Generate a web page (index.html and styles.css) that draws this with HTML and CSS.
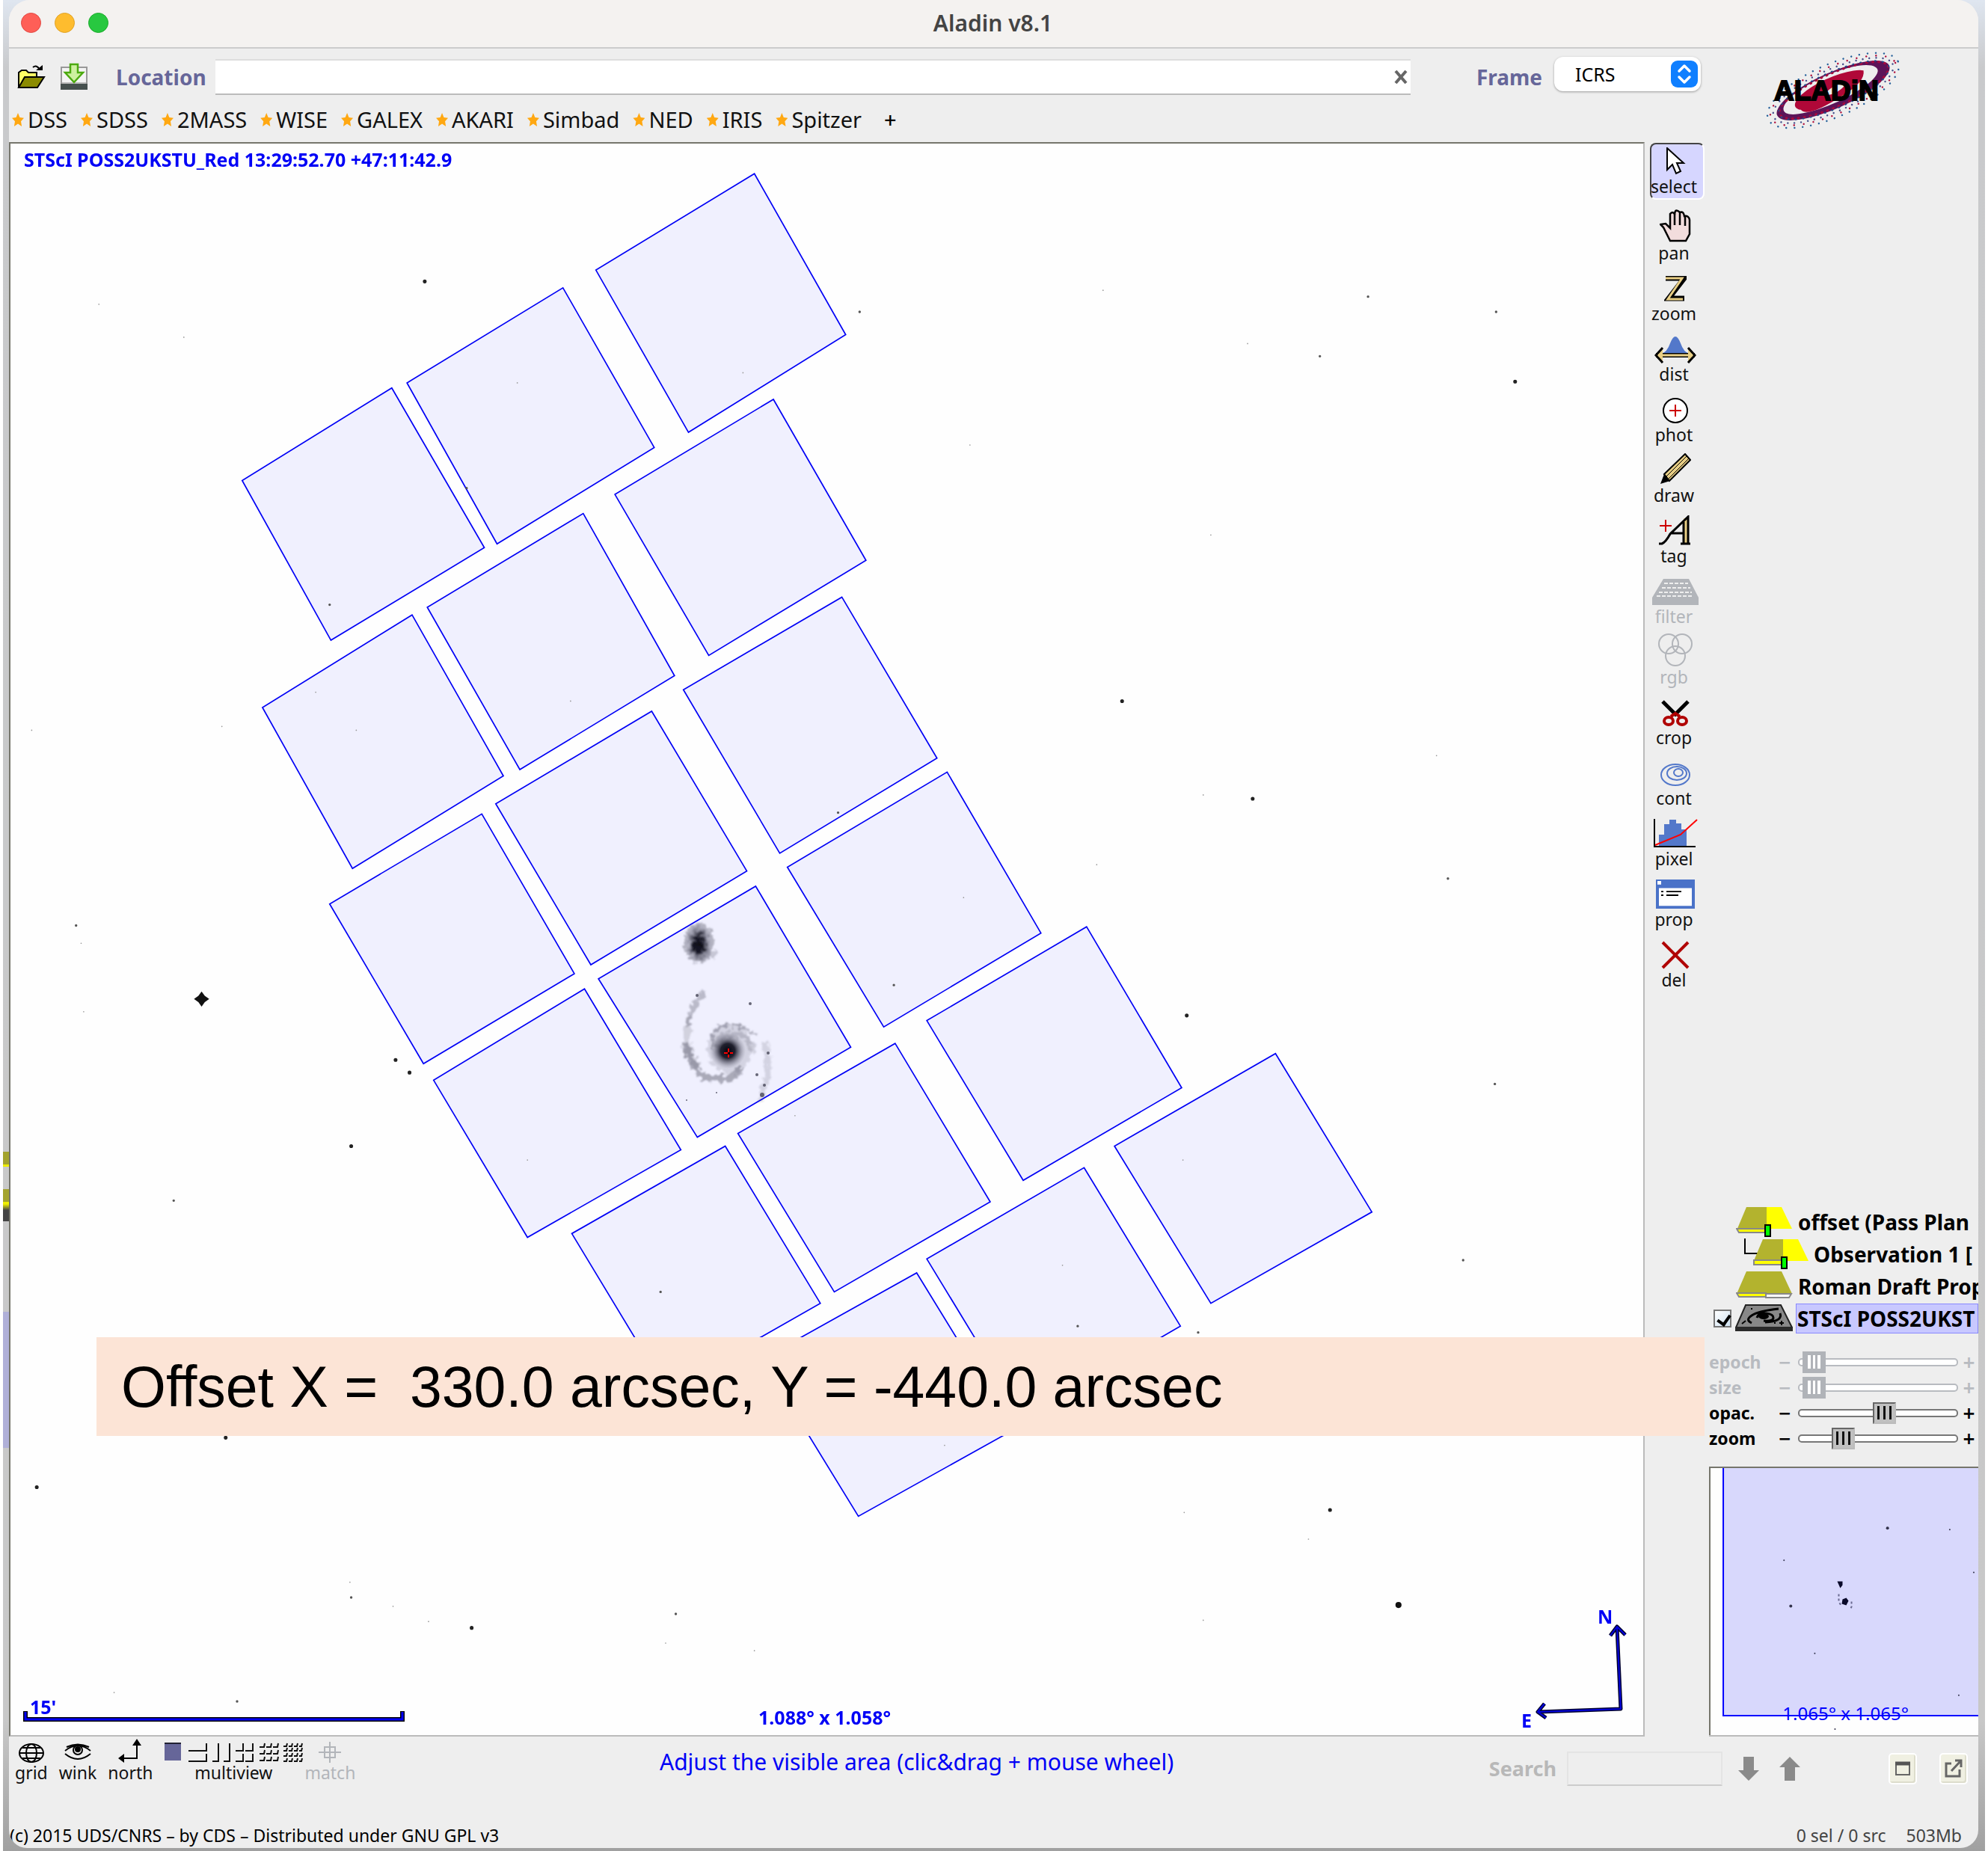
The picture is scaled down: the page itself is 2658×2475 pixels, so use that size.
FILE: index.html
```html
<!DOCTYPE html>
<html lang="en">
<head>
<meta charset="utf-8">
<title>Aladin v8.1</title>
<link rel="stylesheet" href="styles.css">
</head>
<body>
<div class="desktop">
<div class="window">
  <header class="titlebar">
    <div class="lights"><span class="light red"></span><span class="light amber"></span><span class="light green"></span></div>
    <h1 class="title">Aladin v8.1</h1>
  </header>

  <div class="top">
    <div class="top-main">
      <div class="location-row">
        <button class="icon-button" type="button" aria-label="Open">
          <svg width="38" height="34" viewBox="0 0 38 34"><path d="M21 4q5-4 9 3" fill="none" stroke="#000" stroke-width="2"/><path d="M25 8h9V1z"/><path d="M2 31V11l4-3h6l3 3h11v6" fill="#ff6" stroke="#000" stroke-width="2"/><path d="M2 31l8-14h26l-9 14z" fill="#8b8b00" stroke="#000" stroke-width="2"/></svg>
        </button>
        <button class="icon-button save" type="button" aria-label="Save">
          <svg width="38" height="38" viewBox="0 0 38 38"><path d="M2 6h34v22H2z" fill="#f4f4f4" stroke="#999" stroke-width="2"/><path d="M1 28h36v8H1z" fill="#46504e"/><path d="M3 27h32" stroke="#bbb" stroke-width="2"/><path d="M14 2h10v11h7L19 26 7 13h7z" fill="#cdf0a0" stroke="#4caa10" stroke-width="2.500"/></svg>
        </button>
        <label class="field-label" for="location">Location</label>
        <div class="location-box"><input id="location" class="location" type="text"><button class="clear" type="button" aria-label="Clear"><svg width="18" height="18" viewBox="0 0 18 18"><path d="M2 1l14 16M16 1L2 17" stroke="#666" stroke-width="4"/></svg></button></div>
        <label class="field-label frame-label" for="frame">Frame</label>
        <div class="frame-box">
          <select id="frame" class="frame"><option>ICRS</option></select>
          <svg class="stepper" width="36" height="36" viewBox="0 0 36 36"><rect width="36" height="36" rx="9" fill="#0f7fff"/><path d="M11 14l7-7 7 7M11 22l7 7 7-7" fill="none" stroke="#fff" stroke-width="3.500" stroke-linecap="round" stroke-linejoin="round"/></svg>
        </div>
      </div>
      <nav class="bookmarks">
        <a href="#dss">DSS</a><a href="#sdss">SDSS</a><a href="#2mass">2MASS</a><a href="#wise">WISE</a><a href="#galex">GALEX</a><a href="#akari">AKARI</a><a href="#simbad">Simbad</a><a href="#ned">NED</a><a href="#iris">IRIS</a><a href="#spitzer">Spitzer</a>
        <button class="add" type="button">+</button>
      </nav>
    </div>
    <svg class="logo" width="200" height="108" viewBox="0 0 200 108" role="img" aria-label="Aladin">
      <g fill="none" stroke-linecap="round" transform="rotate(-24 104 54)">
        <ellipse cx="104" cy="54" rx="95" ry="35" stroke="#25609a" stroke-width="2.500" stroke-dasharray="0 11"/>
        <ellipse cx="104" cy="54" rx="91" ry="31" stroke="#b0103c" stroke-width="2.500" stroke-dasharray="0 13"/>
        <ellipse cx="104" cy="54" rx="87" ry="28" stroke="#45508c" stroke-width="2.500" stroke-dasharray="0 9"/>
        <path fill="#5c1458" fill-rule="evenodd" d="M22 54a82 24 0 0 1 164 0a82 24 0 0 1-164 0zM34 56a68 18 0 0 0 134-8a68 20 0 0 0-134 8z"/>
        <ellipse cx="105" cy="54" rx="79" ry="22" stroke="#a80a3c" stroke-width="3" stroke-dasharray="1 7"/>
        <ellipse cx="105" cy="54" rx="80" ry="24" stroke="#20508c" stroke-width="2" stroke-dasharray="1 9"/>
        <path fill="#b00838" fill-rule="evenodd" d="M54 60a49 15 0 0 1 98-14q-4 15-38 19q-56 9-60-5zM90 54q14 9 36-2q-14-7-36 2z"/>
      </g>
      <text class="logo-text" x="25" y="67">ALADiN</text>
    </svg>
  </div>

  <main class="workspace">
    <svg class="sky" viewBox="14 192 2183 2128" role="img" aria-label="Sky view">
      <defs>
        <radialGradient id="core"><stop offset="0" stop-color="#05050f"/><stop offset=".4" stop-color="#11111f" stop-opacity=".92"/><stop offset=".7" stop-color="#444455" stop-opacity=".45"/><stop offset="1" stop-color="#888899" stop-opacity="0"/></radialGradient>
        <filter id="soft"><feTurbulence type="fractalNoise" baseFrequency=".16" numOctaves="2" seed="4"/><feDisplacementMap in="SourceGraphic" scale="14" xChannelSelector="R" yChannelSelector="G"/><feGaussianBlur stdDeviation="1.300"/></filter>
      </defs>
      <rect x="12" y="190" width="2190" height="2134" fill="#fefefe"/>
      <g class="footprint" transform="scale(1.6952)">
        <path d="M595 137L667 264 543 341 470 213zM444 227L516 353 392 429 321 302zM309 306L382 432 261 505 191 379z"/>
        <path d="M610 315L683 442 559 517 485 390zM460 405L532 533 410 607 337 479zM325 485L397 612 278 685 207 558z"/>
        <path d="M664 471L739 598 615 673 539 544zM514 561L589 687 466 761 391 634zM380 642L453 768 334 839 260 713z"/>
        <path d="M747 609L821 736 697 810 621 684zM596 699L671 826 550 897 472 772zM461 780L537 907 416 976 342 852z"/>
        <path d="M857 731L932 858 807 931 731 805zM706 823L781 948 658 1019 582 894zM572 904L647 1028 526 1097 451 973z"/>
        <path d="M1006 831L1082 956 955 1028 879 904zM855 921L931 1046 807 1118 731 993zM723 1004L799 1128 677 1196 601 1072z"/>
      </g>
      <g class="stars" transform="scale(1.6952)">
        <path class="faint" d="M408 302h0M765 351h0M955 422h0M949 627h0M1133 596h0M865 682h0M25 576h0M175 573h0M78 240h0M281 576h0M249 546h0M760 708h0M838 998h0M933 915h0M276 1248h0M338 1279h0M310 1267h0M1032 1214h0M949 1278h0M934 1193h0M745 1140h0M595 1302h0M525 1296h0M90 1335h0M64 744h0M66 798h0M984 271h0M586 294h0M627 880h0M450 553h0M416 915h0M870 229h0M145 266h0"/>
        <path class="mid" d="M678 246h0M1041 281h0M1079 234h0M1180 246h0M1142 693h0M1179 855h0M137 947h0M260 477h0M368 385h0M661 641h0M705 777h0M521 1019h0M850 1046h0M1154 994h0M187 1342h0M533 1273h0M277 1260h0M945 1051h0M60 730h0"/>
        <path class="bright" d="M335 222h0M1195 301h0M885 553h0M988 630h0M936 801h0M312 836h0M323 846h0M277 904h0M29 1173h0M178 1134h0M372 1284h0M1049 1191h0"/>
        <circle cx="1103" cy="1266" r="2.400"/>
        <path d="M159 782l2.500 3.500 3.500 2.500-3.500 2.500-2.500 3.500-2.500-3.500-3.500-2.500 3.500-2.500z"/>
      </g>
      <g filter="url(#soft)">
        <ellipse cx="935" cy="1260" rx="20" ry="27" fill="#777788" opacity=".5"/>
        <ellipse cx="934" cy="1263" rx="17" ry="27" fill="url(#core)"/>
        <ellipse cx="950" cy="1276" rx="10" ry="5" fill="#888899" opacity=".4"/>
        <ellipse cx="976" cy="1402" rx="30" ry="34" fill="#888899" opacity=".28"/>
        <g fill="none" stroke="#555566" stroke-linecap="round">
          <path d="M940 1328q-14 16-20 40" stroke-width="8" opacity=".35" stroke-dasharray="7 9 16 8"/>
          <path d="M921 1362q-8 40 10 62" stroke-width="9" opacity=".2"/>
          <path d="M917 1398q12 46 40 44q26 2 32-12" stroke-width="9" opacity=".46"/>
          <path d="M954 1402q-6-32 22-31q18 0 32 12" stroke-width="4" opacity=".4" stroke-dasharray="18 7"/>
          <path d="M958 1395q8-14 28-12q16 4 20 20" stroke-width="8" opacity=".22"/>
          <path d="M1024 1396q6 30-2 55l-4 16" stroke-width="8" opacity=".18"/>
        </g>
      </g>
      <circle cx="973" cy="1405" r="24" fill="url(#core)"/>
      <g fill="#444455" opacity=".8"><circle cx="1027" cy="1408" r="2"/><circle cx="1012" cy="1437" r="2"/><circle cx="1022" cy="1451" r="2"/><circle cx="1019" cy="1464" r="3"/><circle cx="958" cy="1461" r="1"/><circle cx="1003" cy="1342" r="2"/><circle cx="932" cy="1331" r="2"/><circle cx="918" cy="1471" r="1"/></g>
      <path d="M968 1408h12M974 1402v12" stroke="#f00" stroke-width="2"/>
      <path d="M973 1407h3v3h-3z"/>
      <g class="sky-text">
        <text x="32" y="223">STScI POSS2UKSTU_Red 13:29:52.70 +47:11:42.9</text>
        <text x="40" y="2292">15'</text>
        <text x="1014" y="2306">1.088° x 1.058°</text>
        <text x="2136" y="2171">N</text>
        <text x="2034" y="2310">E</text>
      </g>
      <path d="M34 2288v11h504v-11" fill="none" stroke="#000" stroke-width="6"/>
      <path d="M34 2289v10h504v-10" fill="none" stroke="#00f" stroke-width="3"/>
      <g fill="none" stroke-linejoin="round">
        <path d="M2162 2176l5 109-109 4M2153 2187l9-12 11 11M2065 2278l-9 11 11 8" stroke="#000030" stroke-width="5"/>
        <path d="M2162 2176l5 109-109 4M2153 2187l9-12 11 11M2065 2278l-9 11 11 8" stroke="#0000e0" stroke-width="2"/>
      </g>
    </svg>

    <div class="tools">
      <button type="button" class="tool selected"><svg width="30" height="38" viewBox="0 0 30 38"><path d="M4 1v29l7-7 5 12 6-3-5-11h9z" fill="#fff" stroke="#000" stroke-width="2"/></svg>select</button>
      <button type="button" class="tool"><svg width="42" height="44" viewBox="0 0 42 44"><path d="M14 42L5 24 1 20l7-1 6 6V6q3-4 6 0 1-8 7-2 5-2 6 5 6-1 7 5v19l-5 9z" fill="#f2dddd" stroke="#000" stroke-width="2.500"/><path d="M20 6v15M27 5v16M34 9v13" stroke="#000" stroke-width="2.500"/></svg>pan</button>
      <button type="button" class="tool"><svg width="30" height="36" viewBox="0 0 30 36"><path d="M2 3h25L6 30h21" fill="none" stroke="#000" stroke-width="7"/><path d="M2 3h22L5 31h20" fill="none" stroke="#e9cf85" stroke-width="3"/></svg>zoom</button>
      <button type="button" class="tool"><svg width="56" height="36" viewBox="0 0 56 36"><path d="M9 23q8-2 12-14 7-18 14 0 4 12 12 14z" fill="#5378ca"/><path d="M2 25h52" stroke="#000" stroke-width="6"/><path d="M11 15L2 25l9 10M45 15l9 10-9 10" fill="#e9cf85" stroke="#000" stroke-width="3"/><path d="M5 25h46" stroke="#e9cf85" stroke-width="3"/></svg>dist</button>
      <button type="button" class="tool"><svg width="36" height="36" viewBox="0 0 36 36"><circle cx="18" cy="18" r="16" fill="#fff" stroke="#000" stroke-width="2"/><path d="M10 18h16M18 10v16" stroke="#c00" stroke-width="2"/></svg>phot</button>
      <button type="button" class="tool"><svg width="42" height="42" viewBox="0 0 42 42"><path d="M6 28L34 1l7 8-28 28z" fill="#e9cf85" stroke="#000" stroke-width="2"/><path d="M9 31L36 4M12 34L39 7" stroke="#000"/><path d="M6 28L1 41l13-4z"/></svg>draw</button>
      <button type="button" class="tool"><svg width="46" height="40" viewBox="0 0 46 40"><path d="M2 14h16M10 6v16" stroke="#c00" stroke-width="2"/><path d="M34 4h7v34h-7z" fill="#e9cf85"/><path d="M1 38h4q5-2 11-13L40 2v36M16 24h18M34 9v29M30 38h13" fill="none" stroke="#000" stroke-width="3"/></svg>tag</button>
      <button type="button" class="tool" disabled><svg width="64" height="36" viewBox="0 0 64 36"><path d="M16 0h34l13 25v10H1V25z" fill="#b2b5ba"/><path d="M17 6h32M14 12h38M10 18h44M7 23h49" stroke="#eee" stroke-width="2" stroke-dasharray="5 2"/></svg>filter</button>
      <button type="button" class="tool" disabled><svg width="46" height="44" viewBox="0 0 46 44"><g fill="none" stroke="#b2b5ba" stroke-width="2"><circle cx="14" cy="14" r="13"/><circle cx="32" cy="14" r="13"/><circle cx="23" cy="30" r="13"/></g></svg>rgb</button>
      <button type="button" class="tool"><svg width="38" height="36" viewBox="0 0 38 36"><path d="M2 2l17 17L36 2" fill="none" stroke="#000" stroke-width="5"/><ellipse cx="10" cy="28" rx="6" ry="5" fill="none" stroke="#b00000" stroke-width="4"/><ellipse cx="28" cy="28" rx="6" ry="5" fill="none" stroke="#b00000" stroke-width="4"/><path d="M13 22l6-4 6 4" fill="none" stroke="#b00000" stroke-width="4"/></svg>crop</button>
      <button type="button" class="tool"><svg width="40" height="32" viewBox="0 0 40 32"><g fill="none" stroke="#5378ca" stroke-width="2"><ellipse cx="20" cy="15" rx="19" ry="14"/><ellipse cx="22" cy="13" rx="13" ry="9"/><ellipse cx="24" cy="12" rx="6" ry="5"/></g></svg>cont</button>
      <button type="button" class="tool"><svg width="60" height="40" viewBox="0 0 60 40"><path d="M8 38V22h7V8h7V2h9v5h7v8h7v23z" fill="#5378ca"/><path d="M2 1v37h55" fill="none" stroke="#000" stroke-width="2"/><path d="M3 36l34-14L59 2" fill="none" stroke="#f00" stroke-width="2"/></svg>pixel</button>
      <button type="button" class="tool"><svg width="52" height="39" viewBox="0 0 52 41" preserveAspectRatio="none"><path d="M0 0h52v41H0z" fill="#4a72c8"/><path d="M4 12h44v25H4zM2 2h5v5H2z" fill="#fff"/><path d="M7 17h3M14 17h20M7 22h3M14 22h16" stroke="#000" stroke-width="2"/></svg>prop</button>
      <button type="button" class="tool"><svg width="38" height="38" viewBox="0 0 38 38"><path d="M2 2l34 34M36 2L2 36" stroke="#b00000" stroke-width="4"/></svg>del</button>
    </div>

    <aside class="side">
      <ul class="layers">
        <li><svg width="78" height="42" viewBox="0 0 78 42"><path d="M14 1h27v31H1z" fill="#b3b32e"/><path d="M41 1h20l14 29H41z" fill="#ff0"/><path d="M1 30h40v5H4z" fill="#ff0" stroke="#888" stroke-width="2"/><path d="M39 25h7v15h-7z" fill="#0f0" stroke="#000" stroke-width="2"/></svg><span>offset (Pass Plan</span></li>
        <li class="child"><svg width="88" height="42" viewBox="0 0 88 42"><path d="M2 0v20h18" fill="none" stroke="#000" stroke-width="2"/><path d="M26 1h27v31H13z" fill="#b3b32e"/><path d="M53 1h20l14 29H53z" fill="#ff0"/><path d="M14 29h38v6H14z" fill="#ff0" stroke="#888" stroke-width="2"/><path d="M51 25h7v15h-7z" fill="#0f0" stroke="#000" stroke-width="2"/></svg><span>Observation 1 [</span></li>
        <li><svg width="78" height="42" viewBox="0 0 78 42"><path d="M14 1h47l14 30H1z" fill="#b3b32e"/><path d="M40 31h34l-3 5H40z" fill="#fff" stroke="#888" stroke-width="2"/><path d="M1 30h39v5H4z" fill="#ff0" stroke="#888" stroke-width="2"/></svg><span>Roman Draft Prop</span></li>
        <li class="current"><input class="tick" type="checkbox" checked aria-label="Show STScI POSS2UKST"><svg width="78" height="42" viewBox="0 0 78 42"><path d="M14 3h47l15 30v4H1v-4z" fill="#888" stroke="#222" stroke-width="2"/><path d="M0 32h77v6H0z" fill="#2a2a2a"/><path d="M22 27q-9-4 0-10t36-9M60 14q4 11-20 12M29 20q2-7 12-6t10 6-13 4" fill="none" stroke="#000" stroke-width="3"/><ellipse cx="38" cy="18" rx="7" ry="4"/><path d="M14 24l-5 4M62 24v6M59 27h6M21 8h2M52 27h2" stroke="#000" stroke-width="2"/></svg><span>STScI POSS2UKST</span></li>
      </ul>
      <div class="sliders">
        <div class="slider off"><label for="epoch">epoch</label><span class="minus">−</span><input id="epoch" type="range" value="2" disabled><span class="plus">+</span></div>
        <div class="slider off"><label for="size">size</label><span class="minus">−</span><input id="size" type="range" value="2" disabled><span class="plus">+</span></div>
        <div class="slider"><label for="opac">opac.</label><span class="minus">−</span><input id="opac" type="range" value="55"><span class="plus">+</span></div>
        <div class="slider"><label for="zoom">zoom</label><span class="minus">−</span><input id="zoom" type="range" value="24"><span class="plus">+</span></div>
      </div>
      <svg class="preview" viewBox="0 0 359 360" role="img" aria-label="Overview">
        <rect width="359" height="360" fill="#fefefe"/>
        <path d="M19 0h340v333H19z" fill="#d8d8fc"/>
        <path d="M19 0v332h340" fill="none" stroke="#00f" stroke-width="2"/>
        <g fill="#33334c"><circle cx="238" cy="82" r="2"/><circle cx="321" cy="84" r="1"/><circle cx="100" cy="125" r="1"/><circle cx="353" cy="141" r="1"/><circle cx="109" cy="186" r="2"/><circle cx="141" cy="249" r="1"/><circle cx="333" cy="305" r="1"/><circle cx="168" cy="350" r="1"/></g>
        <path d="M171 153h7v5l-3 4zM178 177l5-2 3 4-3 6-6-2z" fill="#0a0a2a"/>
        <path d="M173 170v10l4 7M190 180v7l-2 4" fill="none" stroke="#6a6a90" stroke-width="2" stroke-dasharray="3 3"/>
        <text class="preview-text" x="98" y="338">1.065° x 1.065°</text>
        <path d="M1 359V1h358" fill="none" stroke="#76766c" stroke-width="2"/>
        <path d="M0 359h359" stroke="#bbb" stroke-width="2"/>
      </svg>
    </aside>
    <div class="banner">Offset X =  330.0 arcsec, Y = -440.0 arcsec</div>
  </main>

  <div class="bottom">
    <div class="modes">
      <button type="button" class="mode"><svg width="36" height="34" viewBox="0 0 36 34"><g fill="none" stroke="#000" stroke-width="2"><ellipse cx="18" cy="19" rx="16" ry="12"/><ellipse cx="18" cy="19" rx="7" ry="12"/><path d="M2 19h32M6 12h24M6 26h24"/></g></svg>grid</button>
      <button type="button" class="mode"><svg width="38" height="34" viewBox="0 0 38 34"><g fill="none" stroke="#000" stroke-width="2"><path d="M2 16q17-14 34 0M2 20q17 14 34 0M4 11q15-7 30 0"/><circle cx="19" cy="15" r="6"/></g><circle cx="19" cy="14" r="4"/></svg>wink</button>
      <button type="button" class="mode"><svg width="32" height="34" viewBox="0 0 32 34"><path d="M25 4v22H4" fill="none" stroke="#000" stroke-width="2"/><path d="M25 0l6 9H19zM0 26l8-6v12z"/></svg>north</button>
      <button type="button" class="mode multi"><svg width="186" height="34" viewBox="0 0 186 34"><path d="M1 6h22v23H1z" fill="#666699"/><path d="M1 6h22" stroke="#223" stroke-width="2"/><g fill="none" stroke="#111" stroke-width="2"><path d="M33 16h24V6M33 30h24V20M73 6v24H65M88 6v24H80"/><path d="M96 16h10V6M109 16h10V6M96 30h10V20M109 30h10V20"/><path d="M128 11h6l1-5M137 11h6l1-5M146 11h6l1-5M128 20h6l1-5M137 20h6l1-5M146 20h6l1-5M128 29h6l1-5M137 29h6l1-5M146 29h6l1-5"/><path d="M160 10h4l1-4M167 10h4l1-4M174 10h4l1-4M181 10h3l1-4M160 16h4l1-4M167 16h4l1-4M174 16h4l1-4M181 16h3l1-4M160 23h4l1-4M167 23h4l1-4M174 23h4l1-4M181 23h3l1-4M160 30h4l1-4M167 30h4l1-4M174 30h4l1-4M181 30h3l1-4"/></g></svg>multiview</button>
      <button type="button" class="mode" disabled><svg width="30" height="34" viewBox="0 0 30 34"><path d="M0 18h30M15 4v28M8 11h14v14H8z" fill="none" stroke="#b2b5ba" stroke-width="2"/></svg>match</button>
    </div>
    <p class="hint">Adjust the visible area (clic&amp;drag + mouse wheel)</p>
    <div class="search">
      <label for="search">Search</label>
      <input id="search" type="text" disabled>
      <button type="button" class="arrow" aria-label="Next"><svg width="28" height="34" viewBox="0 0 28 34"><path d="M7 1h14v18h7L14 33 0 19h7z" fill="#8a8a8a"/></svg></button>
      <button type="button" class="arrow" aria-label="Previous"><svg width="28" height="34" viewBox="0 0 28 34"><path d="M7 33h14V15h7L14 1 0 15h7z" fill="#8a8a8a"/></svg></button>
    </div>
    <button type="button" class="pane first" aria-label="Full screen"><svg width="22" height="22" viewBox="0 0 22 22"><path d="M2 3h18v16H2z" fill="none" stroke="#666" stroke-width="2"/><path d="M1 4h20" stroke="#555" stroke-width="5"/></svg></button>
    <button type="button" class="pane" aria-label="Detach"><svg width="24" height="26" viewBox="0 0 24 26"><path d="M9 6H2v17h18v-9M9 16L22 2M14 2h8v9" fill="none" stroke="#666" stroke-width="3"/></svg></button>
  </div>

  <footer class="footer"><span>(c) 2015 UDS/CNRS – by CDS – Distributed under GNU GPL v3</span><span class="status"><span>0 sel / 0 src</span><span>503Mb</span></span></footer>
</div>
</div>
</body>
</html>
```
FILE: styles.css
```css
* { box-sizing: border-box; }
body { margin: 0; background: #fff; font-family: "Noto Sans", sans-serif; font-size: 22px; line-height: 28px; color: #000; }
button { border: 0; padding: 0; background: none; font: inherit; color: inherit; }
svg { display: block; flex: none; }
.desktop {
  margin: 0 4px;
  padding: 0 9px 5px 8px;
  background:
    linear-gradient(transparent 1540px, #a3a32e 1540px, #a3a32e 1557px, #ee0 1557px, #ee0 1560px, transparent 1560px, transparent 1590px, #a3a32e 1590px, #a3a32e 1607px, #ee0 1607px, #ee0 1610px, #444 1618px, #444 1633px, transparent 1633px, transparent 1754px, #b0b0d8 1754px, #b0b0d8 1936px, transparent 1936px) left top / 8px 100% no-repeat,
    linear-gradient(#dfe6f0 0, #c9cacc 90px, #c8c8c8 2300px, #a0a0a0);
}
.window { background: #eee; border-radius: 28px 28px 24px 24px; overflow: hidden; }

.titlebar { display: flex; align-items: center; height: 65px; padding-bottom: 2px; background: #f4f2f0; border-bottom: 2px solid #ccc; }
.lights { display: flex; gap: 18px; width: 200px; padding-left: 16px; }
.light { width: 27px; height: 27px; border-radius: 50%; }
.red { background: #fe5f57; border: 1px solid #e14640; }
.amber { background: #febc2e; border: 1px solid #dfa123; }
.green { background: #28c840; border: 1px solid #1aab29; }
.title { flex: 1; margin: 0; padding-right: 202px; text-align: center; font-size: 30px; font-weight: 600; line-height: 32px; color: #444; }

.top { display: flex; height: 125px; }
.top-main { flex: 1; }
.location-row { display: flex; align-items: center; height: 62px; padding: 14px 0 0 11px; }
.icon-button { margin-right: 19px; }
.icon-button.save { margin-right: 37px; }
.field-label { font-size: 28px; font-weight: 700; line-height: 36px; color: #666699; margin-right: 12px; }
.location-box { display: flex; align-items: center; flex: 1; height: 48px; background: #fff; border-top: 2px solid #ddd; border-bottom: 2px solid #bbb; }
.location { flex: 1; min-width: 0; height: 40px; border: 0; outline: 0; background: none; font: inherit; }
.clear { margin-right: 4px; }
.frame-label { margin: 0 16px 0 88px; }
.frame-box { position: relative; width: 196px; height: 46px; margin: 0 73px 8px 0; }
.frame { appearance: none; width: 100%; height: 100%; padding: 0 28px; border: 0; border-radius: 12px; background: #fff; box-shadow: 0 1px 3px #999; font: 25px/32px "Noto Sans", sans-serif; color: #000; }
.stepper { position: absolute; right: 4px; top: 5px; pointer-events: none; }
.bookmarks { display: flex; align-items: center; height: 63px; padding: 3px 0 0 4px; font-size: 29px; line-height: 36px; gap: 18px; }
.bookmarks a { display: flex; align-items: center; color: #111; text-decoration: none; }
.bookmarks a::before { content: ""; width: 16px; height: 18px; margin-right: 5px; background: #ffa812; clip-path: polygon(50% 0, 65% 33%, 100% 38%, 75% 62%, 82% 100%, 50% 80%, 18% 100%, 25% 62%, 0 38%, 35% 33%); }
.add { margin-left: 12px; font-weight: 500; }
.logo { margin: 2px 98px 0 0; }
.logo-text { font: 700 37px "Liberation Sans", sans-serif; stroke: #000; stroke-width: 2px; }

.workspace { position: relative; display: flex; }
.sky { flex: 1 1 0; min-width: 0; border: 2px solid #bbb; border-color: #76766c #bbb #bbb #76766c; }
.footprint { fill: #f0f0fe; stroke: #0000f6; stroke-width: 1px; }
.stars { fill: #111; stroke: #222; stroke-linecap: round; }
.stars path, .stars circle { stroke-width: 0; }
.stars .faint { stroke: #999; stroke-width: 1px; }
.stars .mid { stroke: #555; stroke-width: 2px; }
.stars .bright { stroke: #222; stroke-width: 3px; }
.sky-text { fill: #0000f6; font-size: 25px; font-weight: 700; }

.tools { display: flex; flex-direction: column; width: 86px; padding: 1px 6px 0 7px; }
.tool { display: flex; flex-direction: column; align-items: center; justify-content: flex-end; height: 81px; padding-bottom: 2px; padding-right: 9px; font-size: 23px; line-height: 28px; color: #111; }
.tool svg { margin-left: 3px; }
.tool.selected { height: 76px; margin-bottom: 6px; background: #d6d6ff; border: 2px solid #fff; border-top-color: #444; border-left-color: #444; border-radius: 8px; }
.tool:disabled, .mode:disabled { color: #b2b5ba; }

.side { display: flex; flex-direction: column; justify-content: flex-end; width: 360px; overflow: hidden; }
.layers { margin: 0; padding: 0; list-style: none; font-size: 28px; font-weight: 700; line-height: 38px; white-space: nowrap; }
.layers li { display: flex; align-items: center; height: 43px; padding-left: 36px; }
.layers .child { padding-left: 46px; }
.layers span { padding-left: 3px; }
.layers .child span { padding-left: 4px; }
.layers .current { padding-left: 6px; }
.layers .current span { flex: 1; min-width: 0; margin-left: 3px; padding-left: 1px; background: #c8c8ff; border: 1px solid #8888ff; }
.layers svg { margin-right: 2px; }
.layers .current svg { margin-right: 0; }
.tick { appearance: none; position: relative; flex: none; width: 24px; height: 24px; margin: 0 5px 0 0; border: 2px solid #777; background: linear-gradient(135deg, #fff, #cfe2f2); }
.tick:checked::after { content: ""; position: absolute; left: 6px; top: 2px; width: 8px; height: 13px; border: solid #000; border-width: 0 4px 4px 0; transform: rotate(35deg); }
.sliders { padding: 20px 0 21px; }
.slider { display: flex; align-items: center; height: 34px; font-size: 23px; font-weight: 700; }
.slider label { width: 93px; }
.slider span { width: 26px; font-size: 28px; font-weight: 600; text-align: center; }
.slider .minus { text-align: left; }
.slider .plus { padding-left: 3px; }
.slider.off { color: #b8bbc0; }
.slider input { appearance: none; width: 214px; height: 29px; margin: 0; background: none; }
.slider input::-webkit-slider-runnable-track { height: 11px; border: 2px solid #777; border-radius: 5px; background: #fff; }
.slider input::-webkit-slider-thumb { appearance: none; width: 31px; height: 29px; margin-top: -11px; border: 2px solid #bbb; border-top-color: #666; border-left-color: #666; background: linear-gradient(90deg, transparent 4px, #111 4px, #111 7px, transparent 7px, transparent 12px, #111 12px, #111 15px, transparent 15px, transparent 20px, #111 20px, #111 23px, transparent 23px) center / 27px 18px no-repeat #c0c0c0; }
.slider.off input::-webkit-slider-runnable-track { border-color: #b8bbc0; }
.slider.off input::-webkit-slider-thumb { border-color: #b0b3b8; background: linear-gradient(90deg, transparent 5px, #fff 5px, #fff 9px, transparent 9px, transparent 12px, #fff 12px, #fff 15px, transparent 15px, transparent 18px, #fff 18px, #fff 22px, transparent 22px) center / 27px 18px no-repeat #b0b3b8; }
.preview { width: 100%; }
.preview-text { fill: #00f; font-size: 24px; }

.banner { position: absolute; left: 117px; right: 366px; bottom: 402px; padding: 0 33px; background: #fce4d6; font: 77px/132px "Liberation Sans", sans-serif; white-space: pre; overflow: hidden; }

.bottom { display: flex; align-items: flex-start; height: 108px; padding: 3px 14px 0 8px; }
.modes { display: flex; width: 862px; }
.mode { display: flex; flex-direction: column; align-items: center; margin-right: 15px; font-size: 23px; line-height: 22px; color: #111; }
.multi { margin-right: 2px; }
.hint { flex: 1; margin: 13px 0 0; font-size: 30px; line-height: 36px; color: #0000f6; white-space: nowrap; }
.search { display: flex; align-items: center; margin-top: 17px; color: #b8b8b8; font-size: 27px; font-weight: 700; line-height: 36px; }
.search input { width: 208px; height: 46px; margin: 0 21px 0 14px; border: 2px solid #e4e4e4; border-bottom-color: #ccc; background: #eee; }
.arrow { margin-right: 27px; }
.pane { display: flex; align-items: center; justify-content: center; width: 38px; height: 42px; margin: 19px 0 0 30px; border: 2px solid #fff; border-radius: 5px; background: #f0f0e2; box-shadow: inset -2px -2px 0 #ddddcc; }
.pane.first { margin-left: 91px; }
.footer { display: flex; justify-content: space-between; height: 41px; padding: 9px 22px 0 1px; font-size: 23px; line-height: 30px; }
.status { display: flex; gap: 27px; color: #444; }
```
